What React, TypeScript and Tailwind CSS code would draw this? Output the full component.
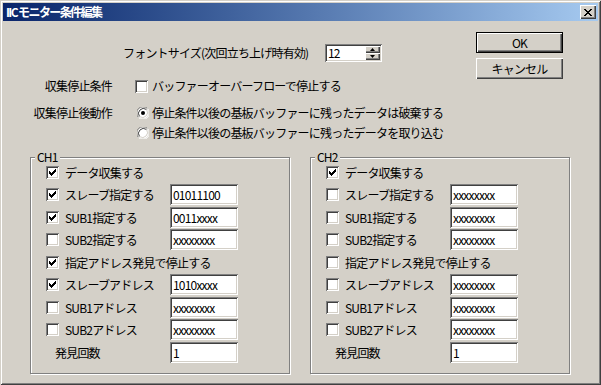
const sunken =
  'shadow-[inset_1px_1px_#808080,inset_-1px_-1px_#ffffff,inset_2px_2px_#404040,inset_-2px_-2px_#d4d0c8]';
const raised =
  'shadow-[inset_1px_1px_#ffffff,inset_-1px_-1px_#404040,inset_-2px_-2px_#808080]';

function Check({ checked }: { checked?: boolean }) {
  return (
    <span className={`w-[13px] h-[13px] bg-white flex items-center justify-center shrink-0 ${sunken}`}>
      {checked && (
        <svg width="7" height="7" viewBox="0 0 7 7" shapeRendering="crispEdges">
          <path d="M6 0h1v3h-1zM5 1h1v3h-1zM4 2h1v3h-1zM3 3h1v3h-1zM2 4h1v3h-1zM1 3h1v3h-1zM0 2h1v3h-1z" fill="#000" />
        </svg>
      )}
    </span>
  );
}

function Radio({ checked }: { checked?: boolean }) {
  return (
    <svg width="12" height="12" viewBox="0 0 12 12" className="shrink-0 ml-[2px]">
      <circle cx="6" cy="6" r="5.5" fill="#ffffff" />
      <path d="M1.5 10.5 A6 6 0 0 1 10.5 1.5" stroke="#808080" strokeWidth="1" fill="none" />
      <path d="M2.5 9.5 A5 5 0 0 1 9.5 2.5" stroke="#404040" strokeWidth="1" fill="none" />
      <path d="M10.5 1.5 A6 6 0 0 1 1.5 10.5" stroke="#ffffff" strokeWidth="1" fill="none" />
      <path d="M9.5 2.5 A5 5 0 0 1 2.5 9.5" stroke="#d4d0c8" strokeWidth="1" fill="none" />
      {checked && <circle cx="6" cy="6" r="2" fill="#000" />}
    </svg>
  );
}

function Field({ value }: { value: string }) {
  return (
    <div className={`w-[68px] h-[21px] bg-white pl-[3px] pt-[4px] leading-[13px] ${sunken}`}>{value}</div>
  );
}

function Button({ label, def }: { label: string; def?: boolean }) {
  return (
    <div className={`h-[21px] flex items-center justify-center ${def ? 'border border-black' : ''}`}>
      <div className={`w-full h-full flex items-center justify-center ${raised}`}>{label}</div>
    </div>
  );
}

type Row = { label: string; checked?: boolean; value?: string; plain?: boolean };

function Group({ title, rows }: { title: string; rows: Row[] }) {
  return (
    <div className="relative w-[260px] h-[217px] border border-[#808080] shadow-[inset_1px_1px_#ffffff,1px_1px_#ffffff] pt-[4px] pl-[15px]">
      <span className="absolute top-[-8px] left-[4px] px-[2px] bg-[#d4d0c8] leading-[14px]">{title}</span>
      {rows.map((r, i) => (
        <div key={i} className={`flex items-start ${i % 2 === 0 ? 'h-[22px]' : 'h-[23px]'}`}>
          <div className={`h-[21px] flex items-center whitespace-nowrap ${r.value !== undefined ? 'w-[124px]' : ''}`}>
            {r.plain ? (
              <span className="pl-[9px]">{r.label}</span>
            ) : (
              <>
                <Check checked={r.checked} />
                <span className="ml-[6px]">{r.label}</span>
              </>
            )}
          </div>
          {r.value !== undefined && <Field value={r.value} />}
        </div>
      ))}
    </div>
  );
}

const ch1: Row[] = [
  { label: 'データ収集する', checked: true },
  { label: 'スレーブ指定する', checked: true, value: '01011100' },
  { label: 'SUB1指定する', checked: true, value: '0011xxxx' },
  { label: 'SUB2指定する', value: 'xxxxxxxx' },
  { label: '指定アドレス発見で停止する', checked: true },
  { label: 'スレーブアドレス', checked: true, value: '1010xxxx' },
  { label: 'SUB1アドレス', value: 'xxxxxxxx' },
  { label: 'SUB2アドレス', value: 'xxxxxxxx' },
  { label: '発見回数', plain: true, value: '1' },
];

const ch2: Row[] = [
  { label: 'データ収集する', checked: true },
  { label: 'スレーブ指定する', value: 'xxxxxxxx' },
  { label: 'SUB1指定する', value: 'xxxxxxxx' },
  { label: 'SUB2指定する', value: 'xxxxxxxx' },
  { label: '指定アドレス発見で停止する' },
  { label: 'スレーブアドレス', value: 'xxxxxxxx' },
  { label: 'SUB1アドレス', value: 'xxxxxxxx' },
  { label: 'SUB2アドレス', value: 'xxxxxxxx' },
  { label: '発見回数', plain: true, value: '1' },
];

export default function App() {
  return (
    <div className="w-[601px] h-[385px] bg-[#d4d0c8] p-[3px] flex flex-col text-black text-[12px] leading-[14px] tracking-[-0.8px] font-['Noto_Sans_CJK_JP','Noto_Sans_CJK_SC',sans-serif] shadow-[inset_1px_1px_#d4d0c8,inset_-1px_-1px_#404040,inset_2px_2px_#ffffff,inset_-2px_-2px_#808080]">
      {/* title bar */}
      <div className="h-[18px] bg-linear-to-r from-[#0a246a] to-[#a6caf0] flex items-center pl-[3px] pr-[2px]">
        <span className="text-white font-bold tracking-[-1.6px]">IIC モニター条件編集</span>
        <div className={`ml-auto w-[16px] h-[14px] bg-[#d4d0c8] flex items-center justify-center ${raised}`}>
          <svg width="8" height="7" viewBox="0 0 8 7" shapeRendering="crispEdges">
            <path d="M0 0h2v1h-2zM6 0h2v1h-2zM1 1h2v1h-2zM5 1h2v1h-2zM2 2h4v1h-4zM3 3h2v1h-2zM2 4h4v1h-4zM1 5h2v1h-2zM5 5h2v1h-2zM0 6h2v1h-2zM6 6h2v1h-2z" fill="#000" />
          </svg>
        </div>
      </div>

      {/* top settings + buttons */}
      <div className="flex items-start">
        <div className="flex-1 flex flex-col">
          <div className="mt-[23px] h-[18px] flex items-center pl-[120px]">
            <span className="w-[202px]">フォントサイズ(次回立ち上げ時有効)</span>
            <div className={`w-[57px] h-[18px] bg-white flex p-[2px] ${sunken}`}>
              <span className="flex-1 pl-[1px] leading-[14px]">12</span>
              <div className="w-[15px] flex flex-col">
                <div className={`h-[7px] bg-[#d4d0c8] flex items-center justify-center ${raised}`}>
                  <svg width="5" height="3" viewBox="0 0 5 3"><path d="M2.5 0L5 3H0z" fill="#000" /></svg>
                </div>
                <div className={`h-[7px] bg-[#d4d0c8] flex items-center justify-center ${raised}`}>
                  <svg width="5" height="3" viewBox="0 0 5 3"><path d="M0 0h5L2.5 3z" fill="#000" /></svg>
                </div>
              </div>
            </div>
          </div>

          <div className="mt-[14px] h-[20px] flex items-center">
            <span className="w-[109px] text-right">収集停止条件</span>
            <span className="ml-[23px] w-[17px] flex"><Check /></span>
            <span>バッファーオーバーフローで停止する</span>
          </div>
          <div className="mt-[7px] h-[20px] flex items-center">
            <span className="w-[109px] text-right">収集停止後動作</span>
            <span className="ml-[23px] w-[17px] flex"><Radio checked /></span>
            <span>停止条件以後の基板バッファーに残ったデータは破棄する</span>
          </div>
          <div className="h-[20px] flex items-center">
            <span className="w-[109px]" />
            <span className="ml-[23px] w-[17px] flex"><Radio /></span>
            <span>停止条件以後の基板バッファーに残ったデータを取り込む</span>
          </div>
        </div>

        <div className="w-[87px] mt-[11px] mr-[35px] flex flex-col gap-[5px]">
          <Button label="OK" def />
          <Button label="キャンセル" />
        </div>
      </div>

      {/* channel groups */}
      <div className="mt-[14px] pl-[27px] flex gap-[20px]">
        <Group title="CH1" rows={ch1} />
        <Group title="CH2" rows={ch2} />
      </div>
    </div>
  );
}
